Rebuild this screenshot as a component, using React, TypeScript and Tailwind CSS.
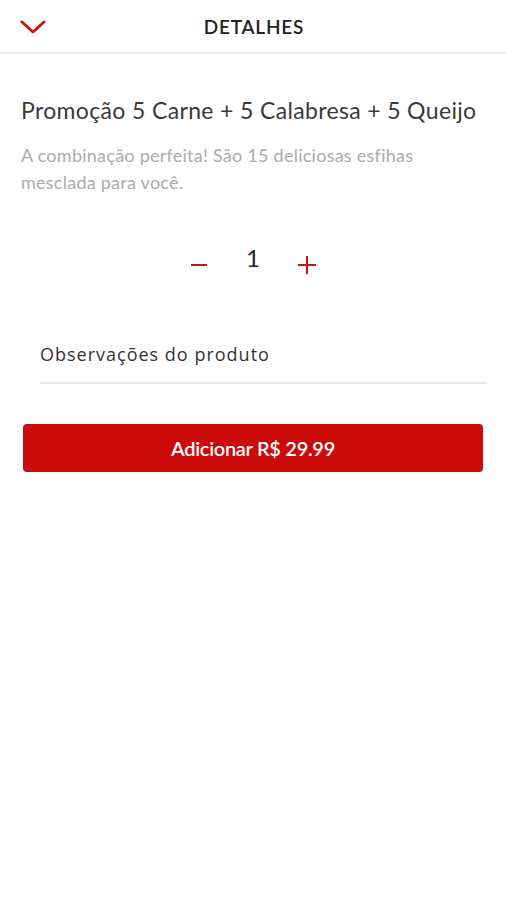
export default function App() {
  return (
    <div className="min-h-screen bg-white" style={{ fontFamily: "Lato, 'Open Sans', sans-serif" }}>
      {/* header */}
      <div className="h-[54px] flex items-center border-b-2 border-[#ececec] relative">
        <button className="pl-[20px] pr-2 h-full flex items-center pt-[2px]">
          <svg width="26" height="14" viewBox="0 0 26 14" fill="none">
            <path d="M2 2 L13 12 L24 2" stroke="#cc1111" strokeWidth="3" strokeLinecap="round" strokeLinejoin="round" />
          </svg>
        </button>
        <div className="absolute inset-x-0 top-0 h-full flex items-center justify-center pointer-events-none pt-[3px]">
          <span className="text-[19px] font-semibold text-[#222] tracking-[0.8px] ml-[2px]">DETALHES</span>
        </div>
      </div>

      <div className="px-[21px]">
        <h1 className="mt-[40px] text-[23px] text-[#3a3a3a] leading-[32px] tracking-[0.35px] whitespace-nowrap">
          Promoção 5 Carne + 5 Calabresa + 5 Queijo
        </h1>
        <p className="mt-[16px] text-[18px] text-[#ababab] leading-[27px] tracking-[0.25px]">
          A combinação perfeita! São 15 deliciosas esfihas mesclada para você.
        </p>

        {/* quantity */}
        <div className="mt-[54px] flex items-start justify-center gap-[30px] h-[32px]">
          <button className="w-[24px] h-[24px] flex items-center justify-center mt-[3px]">
            <span className="block w-[16px] h-[2px] bg-[#cc1111]" />
          </button>
          <span className="w-[24px] text-center text-[24px] text-[#222] leading-none -mt-[4px]">1</span>
          <button className="w-[24px] h-[24px] relative mt-[3px]">
            <span className="absolute left-[3px] top-[11px] block w-[18px] h-[2px] bg-[#cc1111]" />
            <span className="absolute left-[11px] top-[3px] block w-[2px] h-[18px] bg-[#cc1111]" />
          </button>
        </div>

        {/* observations */}
        <div className="mt-[59px] ml-[19px] -mr-[2px] border-b-2 border-[#e9e9e9] pb-[14px]">
          <span className="text-[18px] text-[#333] tracking-[1px]" style={{ fontFamily: "'Open Sans', Lato, sans-serif" }}>
            Observações do produto
          </span>
        </div>

        <button className="mt-[40px] mx-[2px] w-[calc(100%-4px)] h-[48px] rounded-[4px] bg-[#cd0a0a] text-white text-[20px] font-semibold tracking-[-0.3px] flex items-center justify-center">
          Adicionar R$ 29.99
        </button>
      </div>
    </div>
  );
}
